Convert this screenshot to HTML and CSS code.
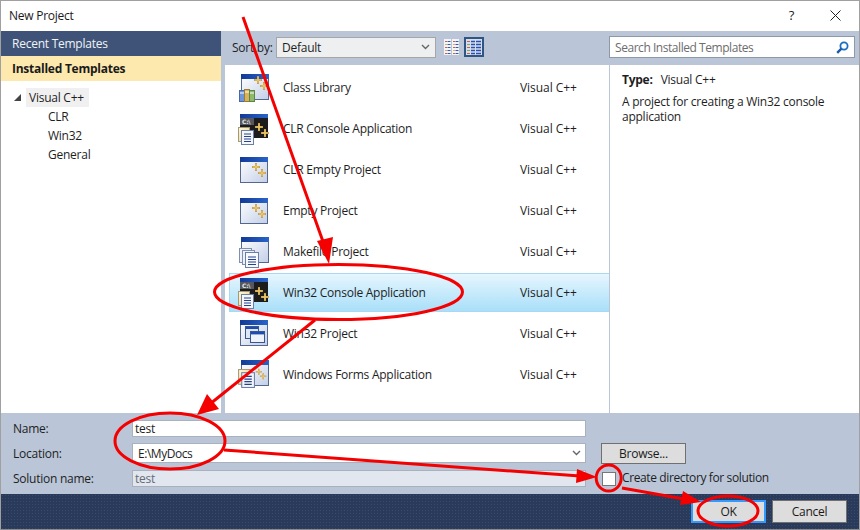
FILE: index.html
```html
<!DOCTYPE html>
<html lang="en">
<head>
<meta charset="utf-8">
<title>New Project</title>
<link rel="stylesheet" href="styles.css">
</head>
<body>
<svg class="defs" width="0" height="0" aria-hidden="true">
  <defs>
    <linearGradient id="winBody" x1="0" y1="0" x2="1" y2="1"><stop offset="0" stop-color="#ffffff"/><stop offset="1" stop-color="#c3cfe8"/></linearGradient>
    <linearGradient id="titleBar" x1="0" y1="0" x2="1" y2="0"><stop offset="0" stop-color="#123a96"/><stop offset="1" stop-color="#2a63c8"/></linearGradient>
    <linearGradient id="docFold" x1="0" y1="0" x2="1" y2="1"><stop offset="0" stop-color="#fff8d8"/><stop offset="1" stop-color="#e8cf8c"/></linearGradient>
    <symbol id="plus2" viewBox="0 0 16 16" overflow="visible">
      <path d="M5 1v8M1 5h8" stroke="#c2953c" stroke-width="2" fill="none"/>
      <path d="M5 1.6v6.8M1.6 5h6.8" stroke="#f8d67c" stroke-width="0.9" fill="none"/>
      <path d="M11 7v8M7 11h8" stroke="#c2953c" stroke-width="2" fill="none"/>
      <path d="M11 7.6v6.8M7.6 11h6.8" stroke="#f8d67c" stroke-width="0.9" fill="none"/>
    </symbol>
    <symbol id="doc" viewBox="0 0 16 18">
      <rect x="0.5" y="0.5" width="11" height="14" fill="url(#docFold)" stroke="#a49a78"/>
      <rect x="3.5" y="3.5" width="12" height="14" fill="#f4f6fb" stroke="#6a7ea8"/>
      <path d="M6 7h7M6 9.5h7M6 12h7M6 14.5h7" stroke="#24428e" stroke-width="1.2"/>
    </symbol>
    <symbol id="window" viewBox="0 0 28 26">
      <rect x="0.5" y="0.5" width="27" height="25" fill="url(#winBody)" stroke="#53678f"/>
      <rect x="0" y="0" width="28" height="5" fill="url(#titleBar)"/>
    </symbol>
    <symbol id="ico-library" viewBox="0 0 32 32">
      <use href="#window" x="3" y="2" width="28" height="26"/>
      <use href="#plus2" x="15" y="3" width="16" height="16"/>
      <rect x="1.5" y="18.5" width="5" height="11" fill="#6f96d6" stroke="#48689f"/>
      <rect x="6.5" y="17.5" width="5" height="12" fill="#d9b35c" stroke="#9a7c38"/>
      <rect x="11.5" y="18.5" width="5" height="11" fill="#8fba6a" stroke="#5d8544"/>
      <path d="M2 21h4M7 20h4M12 21h4" stroke="#ffffff" stroke-width="1"/>
    </symbol>
    <symbol id="ico-console" viewBox="0 0 32 32">
      <rect x="2" y="1" width="28" height="5" fill="url(#titleBar)"/>
      <rect x="2" y="5" width="28" height="20" fill="#1c1c1c"/>
      <rect x="2" y="5" width="14" height="7" fill="#55585e"/>
      <text x="4" y="11" class="ico-text">C:\</text>
      <use href="#plus2" x="16" y="9" width="16" height="16"/>
      <use href="#doc" x="0" y="14" width="16" height="18"/>
    </symbol>
    <symbol id="ico-empty" viewBox="0 0 32 32">
      <use href="#window" x="2" y="3" width="28" height="26"/>
      <use href="#plus2" x="13" y="8" width="16" height="16"/>
    </symbol>
    <symbol id="ico-makefile" viewBox="0 0 32 32">
      <use href="#window" x="3" y="1" width="28" height="26"/>
      <rect x="1.5" y="12.5" width="12" height="14" fill="#eef1f8" stroke="#7e8fb2"/>
      <rect x="4.5" y="14.5" width="12" height="14" fill="#eef1f8" stroke="#7e8fb2"/>
      <rect x="7.5" y="16.5" width="13" height="15" fill="#f7f9fd" stroke="#6a7ea8"/>
      <path d="M10 21h8M10 23.5h8M10 26h8M10 28.5h8" stroke="#24428e" stroke-width="1.2"/>
    </symbol>
    <symbol id="ico-win32" viewBox="0 0 32 32">
      <use href="#window" x="2" y="2" width="28" height="26"/>
      <rect x="7.5" y="8.5" width="13" height="12" fill="#dde6f6" stroke="#3a558f"/>
      <rect x="8" y="9" width="12" height="2" fill="#1c4cb0"/>
      <rect x="12.5" y="13.5" width="14" height="11" fill="#eef3fb" stroke="#3a558f"/>
      <rect x="13" y="14" width="13" height="2.4" fill="#1c4cb0"/>
    </symbol>
    <symbol id="ico-forms" viewBox="0 0 32 32">
      <use href="#window" x="3" y="1" width="28" height="26"/>
      <use href="#plus2" x="17" y="9" width="12" height="12"/>
      <use href="#doc" x="0" y="10" width="17" height="19"/>
    </symbol>
  </defs>
</svg>

<div class="dialog">
  <header class="titlebar">
    <span class="title">New Project</span>
    <span class="help">?</span>
    <svg class="close" width="11" height="11" viewBox="0 0 11 11"><path d="M0.5 0.5l10 10M10.5 0.5l-10 10" stroke="#222" stroke-width="1" fill="none"/></svg>
  </header>

  <div class="main">
    <aside class="sidebar">
      <div class="nav nav-recent">Recent Templates</div>
      <div class="nav nav-installed">Installed Templates</div>
      <div class="tree">
        <div class="tree-root"><span class="tree-arrow"></span><span class="tree-root-label">Visual C++</span></div>
        <div class="tree-child">CLR</div>
        <div class="tree-child">Win32</div>
        <div class="tree-child">General</div>
      </div>
    </aside>

    <section class="content">
      <div class="toolbar">
        <span class="sort-label">Sort by:</span>
        <div class="combo sort-combo"><span>Default</span>
          <svg class="chev" width="9" height="6" viewBox="0 0 9 6"><path d="M1 1l3.5 3.5L8 1" stroke="#666" stroke-width="1.4" fill="none"/></svg>
        </div>
        <svg class="view-small" width="16" height="16" viewBox="0 0 16 16">
          <rect x="0" y="0" width="7" height="16" fill="#f2f4f8"/>
          <rect x="8" y="0" width="7" height="16" fill="#f2f4f8"/>
          <path d="M1 2.5h2M1 8.5h2M1 14.5h2M9 2.5h2M9 8.5h2M9 14.5h2" stroke="#d25b4c"/>
          <path d="M1 5.5h2M1 11.5h2M9 5.5h2M9 11.5h2" stroke="#d8b24e"/>
          <path d="M3.5 2.5h3M3.5 5.5h3M3.5 8.5h3M3.5 11.5h3M3.5 14.5h3M11.5 2.5h3M11.5 5.5h3M11.5 8.5h3M11.5 11.5h3M11.5 14.5h3" stroke="#3559b0"/>
        </svg>
        <div class="view-list">
          <svg width="16" height="16" viewBox="0 0 16 16">
            <path d="M1 2.5h3M1 8.5h3M1 14.5h3" stroke="#d25b4c"/>
            <path d="M1 5.5h3M1 11.5h3" stroke="#7faa5c"/>
            <path d="M5 2.5h4M5 5.5h4M5 8.5h4M5 11.5h4M5 14.5h4M10 2.5h5M10 5.5h5M10 8.5h5M10 11.5h5M10 14.5h5" stroke="#2a4fb0" stroke-width="1.4"/>
          </svg>
        </div>
        <div class="search"><span class="search-text">Search Installed Templates</span>
          <svg width="13" height="13" viewBox="0 0 13 13"><circle cx="8" cy="5" r="3.6" fill="none" stroke="#1b6ec2" stroke-width="1.8"/><path d="M5.4 7.6L1.2 11.8" stroke="#1b5aa8" stroke-width="2.4"/></svg>
        </div>
      </div>

      <div class="panes">
        <div class="list">
          <div class="row"><svg class="ico" width="32" height="32"><use href="#ico-library"/></svg><span class="row-name">Class Library</span><span class="row-lang">Visual C++</span></div>
          <div class="row"><svg class="ico" width="32" height="32"><use href="#ico-console"/></svg><span class="row-name">CLR Console Application</span><span class="row-lang">Visual C++</span></div>
          <div class="row"><svg class="ico" width="32" height="32"><use href="#ico-empty"/></svg><span class="row-name">CLR Empty Project</span><span class="row-lang">Visual C++</span></div>
          <div class="row"><svg class="ico" width="32" height="32"><use href="#ico-empty"/></svg><span class="row-name">Empty Project</span><span class="row-lang">Visual C++</span></div>
          <div class="row"><svg class="ico" width="32" height="32"><use href="#ico-makefile"/></svg><span class="row-name">Makefile Project</span><span class="row-lang">Visual C++</span></div>
          <div class="row row-selected"><svg class="ico" width="32" height="32"><use href="#ico-console"/></svg><span class="row-name">Win32 Console Application</span><span class="row-lang">Visual C++</span></div>
          <div class="row"><svg class="ico" width="32" height="32"><use href="#ico-win32"/></svg><span class="row-name">Win32 Project</span><span class="row-lang">Visual C++</span></div>
          <div class="row"><svg class="ico" width="32" height="32"><use href="#ico-forms"/></svg><span class="row-name">Windows Forms Application</span><span class="row-lang">Visual C++</span></div>
        </div>
        <div class="details">
          <div class="type"><b>Type:</b><span>Visual C++</span></div>
          <p class="desc">A project for creating a Win32 console application</p>
        </div>
      </div>
    </section>
  </div>

  <div class="form">
    <div class="form-labels">
      <label class="flabel">Name:</label>
      <label class="flabel">Location:</label>
      <label class="flabel">Solution name:</label>
    </div>
    <div class="form-fields">
      <div class="field field-name">test</div>
      <div class="field field-loc"><span>E:\MyDocs</span>
        <svg class="chev" width="9" height="6" viewBox="0 0 9 6"><path d="M1 1l3.5 3.5L8 1" stroke="#666" stroke-width="1.4" fill="none"/></svg>
      </div>
      <div class="field field-sol">test</div>
    </div>
    <div class="form-side">
      <div class="btn btn-browse">Browse...</div>
      <div class="check-row"><span class="check"></span><span class="check-label">Create directory for solution</span></div>
    </div>
  </div>

  <footer class="footer">
    <div class="btn btn-ok">OK</div>
    <div class="btn btn-cancel">Cancel</div>
  </footer>
</div>

<svg class="marks" width="860" height="530" viewBox="0 0 860 530" aria-hidden="true">
  <g class="mark-line">
    <path d="M243 17L326 250"/>
    <path d="M315 320L210 404"/>
    <path d="M224 450L580 476"/>
    <path d="M622 488L684 499"/>
    <ellipse cx="338.5" cy="292" rx="124" ry="27.5"/>
    <ellipse cx="170" cy="441" rx="55" ry="28"/>
    <ellipse cx="608.7" cy="478" rx="12.5" ry="13"/>
    <ellipse cx="728" cy="511" rx="30" ry="15"/>
  </g>
  <g class="mark-head">
    <path d="M329 264L317 241L333 237Z"/>
    <path d="M197 415L207 394L219 409Z"/>
    <path d="M597 477L577 469L576 483Z"/>
    <path d="M701 502L683 491L680 505Z"/>
  </g>
</svg>
</body>
</html>
```
FILE: styles.css
```css
* { box-sizing: border-box; }
html, body { margin: 0; padding: 0; }
body {
  width: 860px;
  height: 530px;
  overflow: hidden;
  position: relative;
  font-family: "Open Sans", "Noto Sans", sans-serif;
  font-size: 12px;
  letter-spacing: -0.25px;
  color: #1e1e1e;
  background: #fff;
}
.defs { position: absolute; }
.ico-text { font-family: "DejaVu Sans", sans-serif; font-size: 6px; font-weight: 700; fill: #e8e8e8; }

.dialog {
  width: 860px;
  height: 530px;
  display: flex;
  flex-direction: column;
  border: 1px solid #a0a0a0;
  border-bottom-color: #8a8a8a;
  background: #fff;
}

.titlebar {
  height: 30px;
  flex: none;
  display: flex;
  align-items: center;
  padding: 0 18px 2px 8px;
}
.title { flex: 1; font-size: 12px; color: #1a1a1a; }
.help { margin-right: 36px; margin-top: -1px; font-size: 13px; color: #222; }

.main { flex: 1; display: flex; min-height: 0; }

.sidebar { width: 220px; flex: none; background: #fff; }
.nav { height: 25px; line-height: 26px; padding-left: 11px; }
.nav-recent { background: #3e5377; color: #f1f3f6; }
.nav-installed { background: #fde9ae; color: #1a1a1a; font-weight: 700; }

.tree { padding-top: 7px; }
.tree-root { height: 19px; display: flex; align-items: center; padding-left: 13px; }
.tree-arrow {
  width: 0; height: 0;
  margin-right: 5px;
  border-left: 7px solid transparent;
  border-bottom: 7px solid #444;
}
.tree-root-label { background: #f0f0f0; height: 19px; line-height: 19px; padding: 0 3px; width: 63px; white-space: nowrap; }
.tree-child { height: 19px; line-height: 19px; padding-left: 47px; }

.content { flex: 1; display: flex; flex-direction: column; background: #bac6d8; min-width: 0; }

.toolbar { height: 34px; flex: none; display: flex; align-items: center; padding: 0 4px 2px 11px; }
.sort-label { width: 44px; }
.combo {
  display: flex; align-items: center; justify-content: space-between;
  height: 21px; background: #eeeff1; border: 1px solid #a6a6a6; padding: 0 5px;
}
.sort-combo { width: 160px; }
.view-small { margin-left: 8px; }
.view-list {
  width: 20px; height: 20px; margin-left: 4px;
  display: flex; align-items: center; justify-content: center;
  background: #d5deeb; border: 2px solid #2f5585;
}
.search {
  margin-left: auto; width: 246px; height: 22px;
  display: flex; align-items: center; justify-content: space-between;
  background: #fff; border: 1px solid #8e99a8; padding: 0 5px 0 5px; color: #6d6d6d;
}
.search-text { letter-spacing: -0.45px; line-height: 22px; padding-top: 1px; }

.panes { flex: 1; display: flex; padding-left: 4px; min-height: 0; }
.list { width: 384px; background: #fff; padding: 3px 0 0 4px; flex: none; }
.row {
  height: 39px; margin-bottom: 2px;
  display: flex; align-items: center;
  padding-left: 9px;
  border: 1px solid transparent;
  border-right: 0;
}
.row-selected {
  background: linear-gradient(#e6f6fe, #a9dff9);
  border-color: #a9d8f2;
}
.ico { flex: none; margin-left: -1px; }
.row-name { width: 237px; margin-left: 13px; flex: none; }
.row-lang { letter-spacing: -0.05px; }
.details { flex: 1; margin-left: 1px; background: #fff; padding: 7px 12px; }
.type { display: flex; gap: 8px; line-height: 16px; }
.desc { margin: 6px 0 0; line-height: 15px; width: 225px; }

.form {
  height: 81px; flex: none;
  display: flex;
  background: #bac6d8;
  padding: 7px 0 0 12px;
}
.form-labels { width: 119px; flex: none; display: flex; flex-direction: column; }
.flabel { height: 25.5px; line-height: 18px; }
.flabel:last-child { padding-top: 1px; }
.form-fields { width: 454px; flex: none; display: flex; flex-direction: column; }
.field {
  background: #fff; border: 1px solid #a9b1bd;
  display: flex; align-items: center; justify-content: space-between;
  padding: 0 4px 0 2px;
}
.field-name { height: 17px; margin-bottom: 6px; }
.field-loc { height: 20px; margin-bottom: 7px; padding-left: 5px; letter-spacing: -0.45px; }
.field-sol { height: 17px; background: #e1e6ef; color: #666c76; }
.form-side { margin-left: 15px; padding-top: 23px; }
.btn {
  display: flex; align-items: center; justify-content: center;
  background: #dddddd; border: 1px solid #707070; color: #1a1a1a;
}
.btn-browse { width: 85px; height: 21px; }
.check-row { display: flex; align-items: center; gap: 6px; margin-top: 7px; margin-left: 1px; }
.check-label { letter-spacing: -0.38px; margin-top: -2px; }
.check { width: 14px; height: 14px; background: #fff; border: 1px solid #777; }

.footer {
  height: 35px; flex: none;
  display: flex; gap: 6px; justify-content: flex-end;
  padding: 6px 12px 0 0;
  background-color: #2a3a5b;
  background-image: radial-gradient(circle, #3a4a6c 0.6px, transparent 0.8px);
  background-size: 3px 3px;
}
.btn-ok, .btn-cancel { width: 75px; height: 23px; }
.btn-ok { border: 2px solid #3399ff; }

.marks { position: absolute; left: 0; top: 0; pointer-events: none; }
.mark-line path, .mark-line ellipse { fill: none; stroke: #f50000; stroke-width: 3; }
.mark-head path { fill: #f50000; }
```
